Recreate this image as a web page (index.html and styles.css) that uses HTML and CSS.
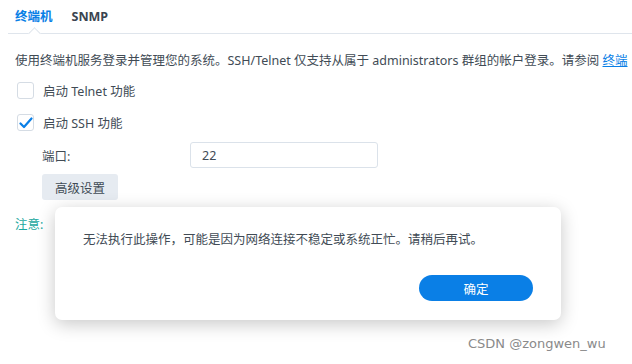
FILE: index.html
```html
<!DOCTYPE html>
<html lang="zh-CN">
<head>
    <meta charset="UTF-8">
    <title>终端机</title>
    <link rel="stylesheet" href="styles.css">
</head>
<body>
    <div class="page">
        <div class="tabs">
            <div class="tab active">终端机</div>
            <div class="tab">SNMP</div>
        </div>

        <p class="desc">使用终端机服务登录并管理您的系统。SSH/Telnet 仅支持从属于 administrators 群组的帐户登录。请参阅 <a href="#">终端</a></p>

        <label class="check-row">
            <span class="box"></span>
            <span>启动 Telnet 功能</span>
        </label>
        <label class="check-row">
            <span class="box checked">
                <svg width="14" height="12" viewBox="0 0 14 12"><path d="M1.5 6.5 L5 10 L12.5 1.5" fill="none" stroke="#0a7fe6" stroke-width="2.2" stroke-linecap="round" stroke-linejoin="round"/></svg>
            </span>
            <span>启动 SSH 功能</span>
        </label>

        <div class="sub">
            <div class="field-row">
                <span class="field-label">端口:</span>
                <input class="field-input" type="text" value="22">
            </div>
            <button class="btn-gray">高级设置</button>
        </div>

        <div class="note">注意:</div>
    </div>

    <div class="dialog">
        <p class="dialog-msg">无法执行此操作，可能是因为网络连接不稳定或系统正忙。请稍后再试。</p>
        <div class="dialog-foot">
            <button class="btn-blue">确定</button>
        </div>
    </div>

    <div class="watermark">CSDN @zongwen_wu</div>
</body>
</html>
```

FILE: styles.css
```css
body {
    margin: 0;
    background: #fff;
    font-family: "Noto Sans", "Noto Sans CJK SC", sans-serif;
    color: #414b55;
    font-size: 12.5px;
    width: 632px;
    height: 364px;
    overflow: hidden;
    position: relative;
}

.page {
    padding: 0 0 0 8px;
}

.tabs {
    display: flex;
    height: 34px;
    border-bottom: 1px solid #dfe5ec;
    position: relative;
    box-sizing: border-box;
}

.tab {
    padding: 0 7px;
    margin-right: 5px;
    line-height: 34px;
    font-weight: bold;
    font-size: 12.5px;
    color: #3a4450;
    position: relative;
}

.tab.active {
    color: #0a7fe6;
}

/* little notch under the active tab */
.tab.active::after {
    content: "";
    position: absolute;
    left: 50%;
    bottom: -1px;
    width: 8px;
    height: 8px;
    margin-left: -4px;
    background: #fff;
    border-left: 1px solid #dfe5ec;
    border-top: 1px solid #dfe5ec;
    transform: translateY(4px) rotate(45deg);
}

.desc {
    margin: 17px 0 0 7px;
    line-height: 20px;
    white-space: nowrap;
    overflow: hidden;
}

.desc a {
    color: #0a7fe6;
}

.check-row {
    display: flex;
    align-items: center;
    gap: 9px;
    margin: 9px 0 0 9px;
    height: 21px;
}

.check-row + .check-row {
    margin-top: 11px;
}

.box {
    width: 15px;
    height: 15px;
    border: 1px solid #d5dce4;
    border-radius: 3px;
    display: flex;
    align-items: center;
    justify-content: center;
}

.sub {
    margin: 9px 0 0 34px;
}

.field-row {
    display: flex;
    align-items: center;
    height: 26px;
}

.field-label {
    width: 148px;
}

.field-input {
    width: 188px;
    height: 26px;
    box-sizing: border-box;
    border: 1px solid #dbe2ea;
    border-radius: 3px;
    padding: 0 11px;
    font: inherit;
    color: #414b55;
    font-size: 12.5px;
}

.btn-gray {
    margin-top: 6px;
    height: 26px;
    padding: 0 13px;
    border: none;
    border-radius: 3px;
    background: #e6ebf1;
    color: #414b55;
    font: inherit;
    font-size: 12.5px;
}

.note {
    margin: 14px 0 0 7px;
    color: #1ba8a0;
}

.dialog {
    position: absolute;
    left: 55px;
    top: 207px;
    width: 506px;
    height: 113px;
    box-sizing: border-box;
    background: #fff;
    border-radius: 7px;
    box-shadow: 0 4px 18px rgba(0, 0, 0, 0.22);
    padding: 24px 28px 0;
}

.dialog-msg {
    margin: 0;
    line-height: 18px;
}

.dialog-foot {
    display: flex;
    justify-content: flex-end;
    margin-top: 26px;
}

.btn-blue {
    width: 114px;
    height: 26px;
    border: none;
    border-radius: 13px;
    background: #0a7fe6;
    color: #fff;
    font: inherit;
    font-size: 12.5px;
}

.watermark {
    position: absolute;
    left: 468px;
    top: 336px;
    font-family: "DejaVu Sans", sans-serif;
    font-size: 13px;
    color: #8a8a8a;
}
```
